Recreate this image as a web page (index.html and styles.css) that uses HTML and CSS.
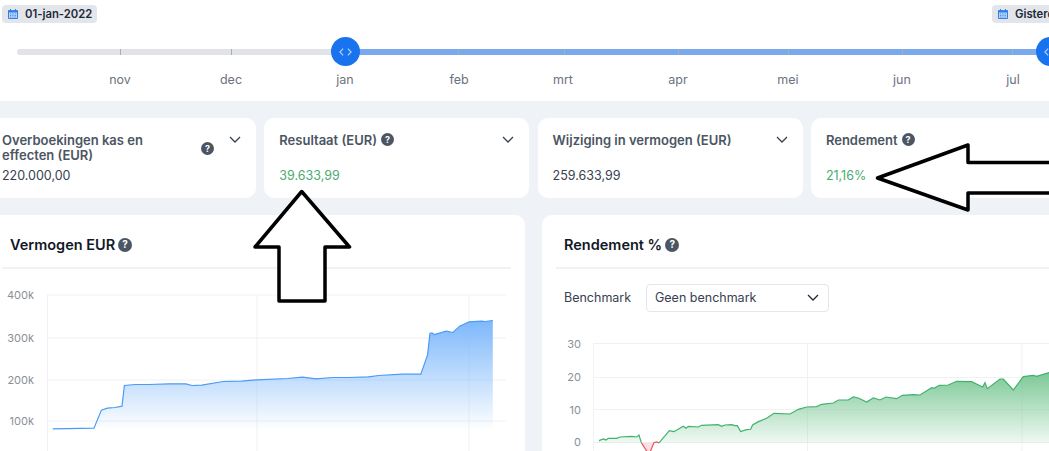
FILE: index.html
```html
<!DOCTYPE html>
<html lang="en">
<head>
  <meta charset="UTF-8">
  <title>Vermogen</title>
  <link rel="stylesheet" href="styles.css">
</head>
<body>
  <div class="period">
    <div class="dates">
      <span class="date">
        <svg class="cal" viewBox="0 0 12 12"><path d="M1.5 3h9v7.5h-9z" fill="#bcd5f7" stroke="#2f7fe6"/><path d="M1 2.2h10v2.3H1z" fill="#2f7fe6"/><path d="M3.5 1v2M8.5 1v2" stroke="#2f7fe6"/><path d="M3 6h6M3 7.5h6M3 9h6" stroke="#2f7fe6" stroke-width=".7" stroke-dasharray="1 .7"/></svg>
        01-jan-2022
      </span>
      <span class="date date-end">
        <svg class="cal" viewBox="0 0 12 12"><path d="M1.5 3h9v7.5h-9z" fill="#bcd5f7" stroke="#2f7fe6"/><path d="M1 2.2h10v2.3H1z" fill="#2f7fe6"/><path d="M3.5 1v2M8.5 1v2" stroke="#2f7fe6"/><path d="M3 6h6M3 7.5h6M3 9h6" stroke="#2f7fe6" stroke-width=".7" stroke-dasharray="1 .7"/></svg>
        Gisteren
      </span>
    </div>
    <div class="track">
      <div class="track-fill"></div>
      <i class="tick" style="left:103px"></i>
      <i class="tick" style="left:214px"></i>
      <i class="tick" style="left:441px"></i>
      <i class="tick" style="left:547px"></i>
      <i class="tick" style="left:661px"></i>
      <i class="tick" style="left:771px"></i>
      <i class="tick" style="left:885px"></i>
      <i class="tick" style="left:995px"></i>
      <div class="thumb" style="left:328px"><svg viewBox="0 0 16 10"><path d="M5.5 1.5 2 5l3.500 3.500M10.500 1.500 14 5l-3.500 3.500" fill="none" stroke="#b9d2f8" stroke-width="1.200"/></svg></div>
      <div class="thumb" style="left:1033px"><svg viewBox="0 0 16 10"><path d="M5.5 1.5 2 5l3.500 3.500M10.500 1.500 14 5l-3.500 3.500" fill="none" stroke="#b9d2f8" stroke-width="1.200"/></svg></div>
    </div>
    <div class="months">
      <span style="left:120px">nov</span>
      <span style="left:231px">dec</span>
      <span style="left:345px">jan</span>
      <span style="left:459px">feb</span>
      <span style="left:563px">mrt</span>
      <span style="left:678px">apr</span>
      <span style="left:788px">mei</span>
      <span style="left:902px">jun</span>
      <span style="left:1013px">jul</span>
    </div>
  </div>

  <div class="stats">
    <div class="stat stat-first">
      <div class="stat-head">
        <div class="stat-title stat-title-wide"><span>Overboekingen kas en effecten (EUR)</span><b class="help">?</b></div>
        <svg class="chev" viewBox="0 0 12 7"><path d="M1 1l5 5 5-5" fill="none" stroke="#374151" stroke-width="1.300"/></svg>
      </div>
      <div class="stat-value">220.000,00</div>
    </div>
    <div class="stat">
      <div class="stat-head">
        <div class="stat-title"><span>Resultaat (EUR)</span><b class="help">?</b></div>
        <svg class="chev" viewBox="0 0 12 7"><path d="M1 1l5 5 5-5" fill="none" stroke="#374151" stroke-width="1.300"/></svg>
      </div>
      <div class="stat-value green">39.633,99</div>
    </div>
    <div class="stat">
      <div class="stat-head">
        <div class="stat-title"><span>Wijziging in vermogen (EUR)</span></div>
        <svg class="chev" viewBox="0 0 12 7"><path d="M1 1l5 5 5-5" fill="none" stroke="#374151" stroke-width="1.300"/></svg>
      </div>
      <div class="stat-value">259.633,99</div>
    </div>
    <div class="stat">
      <div class="stat-head">
        <div class="stat-title"><span>Rendement</span><b class="help">?</b></div>
      </div>
      <div class="stat-value green">21,16%</div>
    </div>
  </div>

  <div class="charts">
    <section class="card">
      <h2 class="card-title">Vermogen EUR <b class="help help-big">?</b></h2>
      <svg class="plot plot-left" viewBox="2 268.5 509 182.5">
        <defs>
          <linearGradient id="blueFill" x1="0" y1="0" x2="0" y2="1">
            <stop offset="0" stop-color="#7db8fb"/>
            <stop offset="1" stop-color="#7db8fb" stop-opacity="0"/>
          </linearGradient>
          <linearGradient id="greenFill" x1="0" y1="0" x2="0" y2="1">
            <stop offset="0" stop-color="#7cc896"/>
            <stop offset="1" stop-color="#7cc896" stop-opacity=".12"/>
          </linearGradient>
        </defs>
        <path class="grid" d="M47.500 294.500H506M47.500 337.500H506M47.500 379.500H506M47.500 420.500H506M47.500 294V451M257 294V451M469 294V451"/>
        <g class="axis" text-anchor="end">
          <text x="34" y="298">400k</text>
          <text x="34" y="341">300k</text>
          <text x="34" y="383">200k</text>
          <text x="34" y="424">100k</text>
        </g>
        <g transform="translate(0 215) scale(.338 .3333)">
          <path fill="url(#blueFill)" d="M156 640 278 638 300 584 318 578 340 576 361 572 368 510 400 507 440 507 500 505 550 505 568 510 597 509 660 498 715 497 760 493 850 489 895 485 935 490 985 486 1030 486 1090 484 1120 480 1190 476 1245 476 1265 418 1272 354 1278 352 1285 357 1320 347 1340 351 1360 332 1388 319 1425 317 1435 318 1458 315V645H156Z"/>
          <path class="line" stroke="#4a9af7" d="M156 640 278 638 300 584 318 578 340 576 361 572 368 510 400 507 440 507 500 505 550 505 568 510 597 509 660 498 715 497 760 493 850 489 895 485 935 490 985 486 1030 486 1090 484 1120 480 1190 476 1245 476 1265 418 1272 354 1278 352 1285 357 1320 347 1340 351 1360 332 1388 319 1425 317 1435 318 1458 315"/>
        </g>
      </svg>
    </section>
    <section class="card">
      <h2 class="card-title">Rendement % <b class="help help-big">?</b></h2>
      <div class="benchmark">
        <label class="benchmark-label">Benchmark</label>
        <div class="select">Geen benchmark
          <svg class="chev chev-select" viewBox="0 0 12 7"><path d="M1 1l5 5 5-5" fill="none" stroke="#1f2937" stroke-width="1.300"/></svg>
        </div>
      </div>
      <svg class="plot plot-right" viewBox="556 330 520 121">
        <path class="grid" d="M594 343.500H1076M594 377.500H1076M594 409.500H1076M594 442.500H1076M593.500 343V451M807.500 343V451M1022 343V451"/>
        <g class="axis" text-anchor="end">
          <text x="581" y="348">30</text>
          <text x="581" y="381">20</text>
          <text x="581" y="414">10</text>
          <text x="581" y="446">0</text>
        </g>
        <g transform="translate(530 215) scale(.3333)">
          <path fill="url(#greenFill)" d="M207 677 220 672 228 675 235 670 260 670 270 666 305 664 320 666 327 660 334 683H387L418 647 432 650 460 634 468 640 475 634 505 636 515 631 565 629 575 634 585 630 605 629 615 632 622 632 632 650 650 644 662 643 668 630 685 620 710 610 732 595 780 597 805 583 830 576 860 575 875 568 910 564 925 555 955 555 970 546 985 549 1010 561 1030 549 1050 555 1068 546 1100 551 1117 541 1150 539 1170 540 1205 518 1212 520 1228 511 1255 510 1280 499 1325 500 1358 516 1365 503 1372 521 1410 492 1420 492 1450 525 1480 485 1510 481 1520 484 1560 472V683H207Z"/>
          <path fill="#fbdfe2" d="M334 683 350 708H364L372 683Z"/>
          <path class="line" stroke="#f0505f" d="M334 683 350 708 358 716 365 700 372 683 380 681 387 684"/>
          <path class="line" stroke="#3fb26c" d="M207 677 220 672 228 675 235 670 260 670 270 666 305 664 320 666 327 660 334 683M387 684 418 647 432 650 460 634 468 640 475 634 505 636 515 631 565 629 575 634 585 630 605 629 615 632 622 632 632 650 650 644 662 643 668 630 685 620 710 610 732 595 780 597 805 583 830 576 860 575 875 568 910 564 925 555 955 555 970 546 985 549 1010 561 1030 549 1050 555 1068 546 1100 551 1117 541 1150 539 1170 540 1205 518 1212 520 1228 511 1255 510 1280 499 1325 500 1358 516 1365 503 1372 521 1410 492 1420 492 1450 525 1480 485 1510 481 1520 484 1560 472"/>
        </g>
      </svg>
    </section>
  </div>

  <!-- hand drawn arrows on top of the screenshot -->
  <svg class="arrows" viewBox="0 0 1049 451">
    <path d="M301.700 191.500 349.500 247H325V301H279V247H255Z"/>
    <path d="M877.500 178 968 145V162.500H1055V193H968V210Z"/>
  </svg>
</body>
</html>
```

FILE: styles.css
```css
* {
  box-sizing: border-box;
}

html, body {
  height: 451px;
  overflow: hidden;
}

body {
  margin: 0;
  width: 1049px;
  position: relative;
  font-family: Inter, 'Noto Sans', sans-serif;
  background: #eff3f8;
  color: #374151;
}

.period {
  height: 101px;
  width: 1049px;
  background: #fff;
  padding-top: 5px;
}

.dates {
  display: flex;
  justify-content: space-between;
  height: 18px;
  padding-left: 2px;
  width: 1100px;
}

.date {
  display: flex;
  align-items: center;
  gap: 6px;
  height: 18px;
  padding: 0 5px;
  background: #e2e5ea;
  border-radius: 4px;
  font-size: 11.3px;
  font-weight: 600;
  color: #1f2937;
  white-space: nowrap;
}

.date-end {
  margin-right: 8px;
  width: 100px;
}

.cal {
  width: 12px;
  height: 12px;
}

.track {
  position: relative;
  margin: 26px 0 0 17px;
  width: 1040px;
  height: 6px;
  background: #e1e3e8;
  border-radius: 3px;
}

.track-fill {
  position: absolute;
  left: 328px;
  right: 0;
  top: 0;
  bottom: 0;
  background: #7aa9ec;
}

.tick {
  position: absolute;
  top: 0;
  width: 1px;
  height: 6px;
  background: #a9adb5;
}

.thumb {
  position: absolute;
  top: -12px;
  width: 29px;
  height: 29px;
  margin-left: -14.5px;
  display: flex;
  align-items: center;
  justify-content: center;
  background: #1a73ee;
  border-radius: 50%;
}

.thumb svg {
  width: 15px;
  height: 10px;
}

.months {
  position: relative;
  margin-top: 17px;
  height: 16px;
}

.months span {
  position: absolute;
  top: 0;
  transform: translateX(-50%);
  font-size: 12.5px;
  line-height: 16px;
  color: #6b7280;
}

.stats {
  display: flex;
  gap: 8.3px;
  margin: 17px 0 0 -9px;
  width: 1100px;
}

.stat {
  flex: 0 0 265px;
  height: 80px;
  background: #fff;
  border-radius: 10px;
  padding: 15px 15px 0;
}

.stat-head {
  display: flex;
  justify-content: space-between;
  height: 33px;
  color: #4b5563;
}

.stat-title {
  display: flex;
  align-items: flex-start;
  gap: 4px;
  font-size: 13px;
  font-weight: 600;
  line-height: 15px;
}

.stat-title-wide {
  margin: -3px 0 0 -4px;
  width: 212px;
  justify-content: space-between;
  align-items: center;
}

.stat-title-wide span {
  width: 165px;
}

.help {
  display: inline-flex;
  align-items: center;
  justify-content: center;
  width: 13px;
  height: 13px;
  flex: none;
  background: #4b5563;
  border-radius: 50%;
  color: #fff;
  font-size: 9px;
  font-weight: 700;
  line-height: 13px;
}

.help-big {
  width: 14px;
  height: 14px;
  font-size: 10px;
}

.chev {
  width: 12px;
  height: 7px;
  margin-top: 3px;
  flex: none;
}

.stat-value {
  font-size: 12.5px;
  line-height: 17px;
  margin-top: 1px;
}

.stat-first .stat-value {
  margin-left: -4px;
}

.green {
  color: #4aab6f;
}

.charts {
  display: flex;
  gap: 17px;
  margin: 17px 0 0 -12px;
  width: 1100px;
}

.card {
  flex: 0 0 537px;
  height: 236px;
  overflow: hidden;
  background: #fff;
  border-radius: 10px 10px 0 0;
  padding: 0 14px;
}

.card-title {
  display: flex;
  align-items: center;
  gap: 3px;
  height: 53.5px;
  margin: 0;
  padding: 8px 0 0 8px;
  border-bottom: 2px solid #f1f2f4;
  font-size: 14.5px;
  font-weight: 600;
  color: #111827;
}

.plot {
  display: block;
}

.plot-left {
  width: 509px;
  height: 182.5px;
}

.plot-right {
  width: 520px;
  height: 121px;
}

.grid {
  fill: none;
  stroke: #f0f1f3;
  stroke-width: 1;
}

.axis {
  font-size: 11px;
  fill: #8b8f97;
}

.line {
  fill: none;
  stroke-width: 3.5;
}

.benchmark {
  display: flex;
  align-items: center;
  gap: 14px;
  height: 61.5px;
  padding: 0 0 3px 8px;
  font-size: 12.5px;
}

.benchmark-label {
  width: 68px;
}

.select {
  display: flex;
  align-items: center;
  justify-content: space-between;
  width: 183px;
  height: 28px;
  padding: 0 9px 0 8px;
  background: #fff;
  border: 1px solid #e4e6ea;
  border-radius: 4px;
  color: #374151;
}

.chev-select {
  margin-top: 0;
}

.arrows {
  position: absolute;
  left: 0;
  top: 0;
  width: 1049px;
  height: 451px;
  pointer-events: none;
}

.arrows path {
  fill: #fff;
  stroke: #000;
  stroke-width: 3.5;
  stroke-linejoin: round;
}
```
